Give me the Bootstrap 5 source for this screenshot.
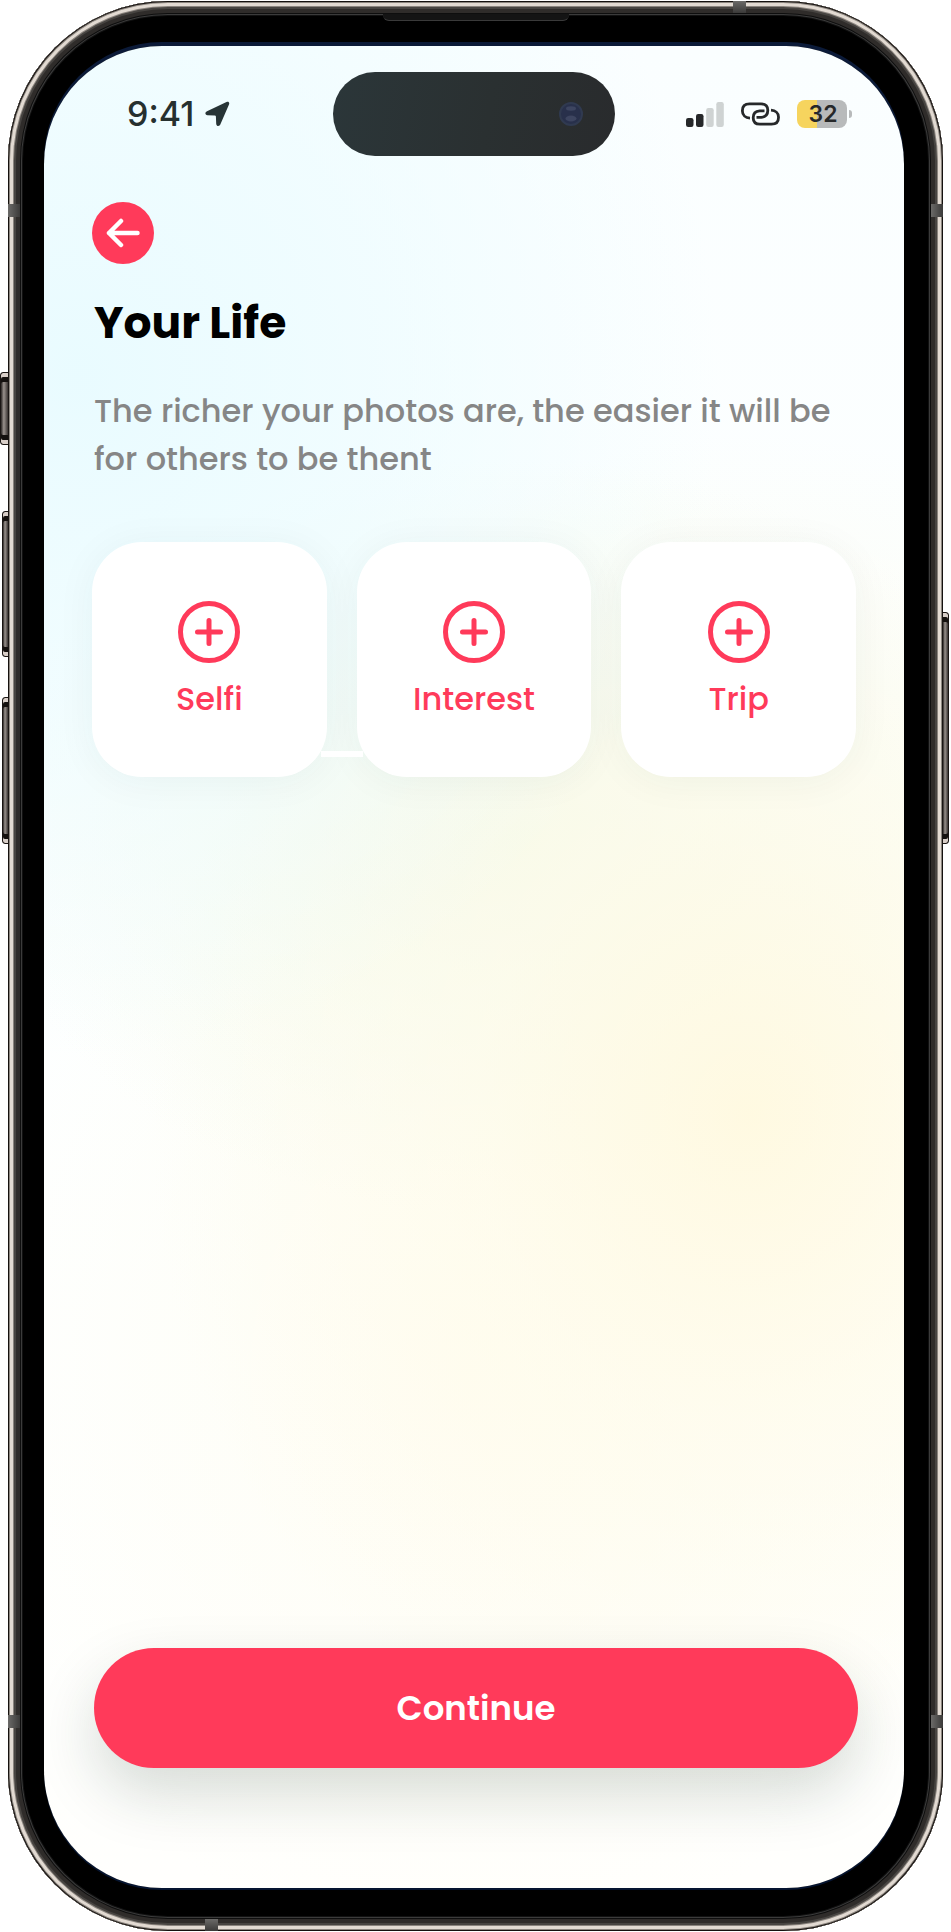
<!DOCTYPE html>
<html lang="en">
<head>
<meta charset="utf-8">
<meta name="viewport" content="width=device-width, initial-scale=1">
<title>Your Life</title>
<link href="https://cdn.jsdelivr.net/npm/bootstrap@5.3.0/dist/css/bootstrap.min.css" rel="stylesheet">
<style>
  :root { --accent: #ff3a5a; --ink: #26302f; }
  body { background: #fff; font-family: Poppins, Inter, "Open Sans", sans-serif; }

  /* Device frame */
  .device { padding: 1px 0; }
  .phone {
    margin: 0 8px; min-height: calc(100vh - 2px); padding: 45px 39px 43px 36px;
    border-radius: 160px; background: #000;
    box-shadow: inset 0 0 0 1px #15110f, inset 0 0 0 2px #8d8780, inset 0 0 0 5px #e2dad2,
      inset 0 0 0 6px #8a847e, inset 0 0 0 8px #474441, inset 0 0 0 12px #2f2c2a,
      inset 0 0 0 13px #0e0e0e, inset 0 0 0 14px #3b3b3b, inset 0 0 0 15px #111;
  }
  .screen {
    border-radius: 118px;
    box-shadow: 0 -4px 0 #0b1a38, 0 2px 0 #051430;
    background:
      radial-gradient(ellipse 640px 680px at 4% 18%, rgba(232,251,255,.95), rgba(236,252,255,.65) 50%, rgba(255,255,255,0)),
      radial-gradient(ellipse 600px 680px at 82% 58%, rgba(255,249,224,.95), rgba(255,251,232,.6) 45%, rgba(255,255,255,0)),
      radial-gradient(ellipse 540px 380px at 55% 43%, rgba(243,249,234,.95), rgba(255,255,255,0)),
      radial-gradient(ellipse 500px 600px at 50% 72%, rgba(255,253,242,.9), rgba(255,255,255,0)),
      linear-gradient(#fafeff, #fdffff 40%, #fffffd);
  }
  .side-key { position: absolute; background: linear-gradient(90deg, #2b2624, #9a928d 40%, #3a3432); border: 1px solid #1a1513; box-shadow: inset 0 4px 0 #d8cec8, inset 0 -4px 0 #d8cec8, inset 0 9px 0 #15110f, inset 0 -9px 0 #15110f; }
  .key-left { left: 2px; width: 7px; border-radius: 3px 0 0 3px; }
  .key-mute { left: 0; width: 9px; top: 372px; height: 73px; }
  .key-up { top: 511px; height: 146px; }
  .key-down { top: 697px; height: 147px; }
  .key-power { right: 2px; width: 7px; top: 612px; height: 232px; border-radius: 0 3px 3px 0; }
  .band { position: absolute; background: linear-gradient(90deg, #6b6a68, #3b3a39); }
  .band-h { width: 12px; height: 13px; }
  .band-v { width: 13px; height: 12px; background: linear-gradient(#6b6a68, #3b3a39); }
  .band-l { left: 8px; } .band-r { right: 8px; }
  .band-hi { top: 204px; } .band-lo { bottom: 204px; }
  .band-t { top: 1px; right: 205px; } .band-b { bottom: 1px; left: 205px; }
  .earpiece { position: absolute; top: 14px; left: 50%; width: 186px; height: 7px; transform: translateX(-50%); background: #141414; border-bottom: 1px solid #3a3a3a; border-radius: 0 0 6px 6px; }

  /* Status bar */
  .status { display: grid; grid-template-columns: 1fr 282px 1fr; align-items: center; padding-top: 26px; color: var(--ink); }
  .status-l { padding-left: 83px; gap: 11px; }
  .status-r { padding-right: 52px; gap: 17px; }
  .clock { font: 500 34px/40px Inter, sans-serif; }
  .island { height: 84px; border-radius: 42px; padding-right: 32px; background: linear-gradient(100deg, #2b3639, #2a3031 55%, #292b2d); }
  .battery { font: 600 23px/28px Inter, sans-serif; width: 50px; height: 28px; border-radius: 8px; text-align: center; color: #26282a; background: linear-gradient(90deg, #f6d45e 40%, #b8babb 40%); padding-left: 2px; }
  .nub { width: 3px; height: 8px; margin-left: 2px; border-radius: 0 4px 4px 0; background: #b8babb; }

  /* Content */
  .content { padding: 46px 48px 0; }
  .back { width: 62px; height: 62px; background: var(--accent); border: 0; }
  .title { font-size: 44px; line-height: 56px; font-weight: 700; color: #000; margin: 31px 0 36px 2px; }
  .intro { font-size: 32px; line-height: 48px; font-weight: 500; color: #868686; margin: 0 0 59px 2px; }
  .slots { display: grid; grid-template-columns: repeat(3, 1fr); gap: 30px; }
  .slot {
    position: relative; aspect-ratio: 1; gap: 12px; padding: 6px 0 0; border: 0; border-radius: 50px; background: #fff; color: var(--accent);
    font-size: 32px; line-height: 48px; font-weight: 500; box-shadow: 0 4px 40px rgba(20,60,50,.05);
  }
  .slot-linked::after { content: ""; position: absolute; left: calc(100% - 6px); bottom: 20px; width: 42px; height: 6px; background: #fff; z-index: 1; }
  .actions { padding: 0 46px 120px 50px; }
  .continue { height: 120px; border: 0; border-radius: 60px; background: var(--accent); color: #fff; font-size: 34px; line-height: 48px; font-weight: 600; box-shadow: 0 26px 60px rgba(20,50,35,.17); }
</style>
</head>
<body>
<div class="device position-relative">
  <i class="side-key key-left key-mute"></i>
  <i class="side-key key-left key-up"></i>
  <i class="side-key key-left key-down"></i>
  <i class="side-key key-power"></i>
  <div class="phone d-flex flex-column">
    <div class="screen flex-grow-1 d-flex flex-column">
      <header class="status">
        <div class="status-l d-flex align-items-center">
          <span class="clock">9:41</span>
          <svg width="25" height="26" viewBox="0 0 25 26" aria-hidden="true"><path d="M21.500 1.100 2 10.200C-.4 11.400 0 14 2.400 14.200L9.800 14.500Q10.800 14.600 10.900 15.600L11.200 22.700C11.400 25.500 14.300 25.800 15.300 23.600L24 3.600C24.800 1.600 23.400.2 21.500 1.100Z" fill="#273436"/></svg>
        </div>
        <div class="island d-flex align-items-center justify-content-end">
          <svg width="24" height="24" viewBox="0 0 24 24" aria-hidden="true"><circle cx="12" cy="12" r="11" fill="#28304b" stroke="#303a50" stroke-width="2"/><ellipse cx="12" cy="6.500" rx="5" ry="2.200" fill="#3d4560"/><ellipse cx="12" cy="16.500" rx="5.500" ry="3" fill="#3d4560"/></svg>
        </div>
        <div class="status-r d-flex align-items-center justify-content-end">
          <svg width="38" height="26" viewBox="0 0 38 26" aria-label="Signal"><g fill="#26282a"><rect y="17" width="7.500" height="9" rx="2.200"/><rect x="10" y="13" width="7.500" height="13" rx="2.200"/></g><g fill="#cfd3d3"><rect x="20.200" y="7" width="7.500" height="19" rx="2.200"/><rect x="30.300" y="1" width="7.500" height="25" rx="2.200"/></g></svg>
          <svg width="39" height="24" viewBox="0 0 39 24" fill="none" stroke="#26282a" stroke-width="2.800" stroke-linecap="butt" aria-hidden="true"><path d="M9 16.200C4.500 16 1.400 13.200 1.400 9V8.500Q1.400 1.800 8.500 1.800H20Q26.800 1.800 26.800 8.300T20.300 15.300H15.500"/><path d="M30 8.200C34.500 8.500 37.500 11.200 37.500 15V15.500Q37.500 22.200 30.500 22.200H19Q12.200 22.200 12.200 15.700T18.700 8.900H23.500"/></svg>
          <div class="d-flex align-items-center"><div class="battery">32</div><i class="nub"></i></div>
        </div>
      </header>

      <main class="content">
        <button type="button" class="back rounded-circle p-0 d-flex align-items-center justify-content-center" aria-label="Back">
          <svg width="34" height="30" viewBox="0 0 34 30" fill="none" stroke="#fff" stroke-width="4.500" stroke-linecap="round" stroke-linejoin="round" aria-hidden="true"><path d="M31.500 15H3M15 3 3 15 15 27"/></svg>
        </button>
        <h1 class="title">Your Life</h1>
        <p class="intro">The richer your photos are, the easier it will be for others to be thent</p>
        <div class="slots">
          <button type="button" class="slot slot-linked d-flex flex-column align-items-center justify-content-center">
            <svg width="62" height="62" viewBox="0 0 62 62" fill="none" stroke="currentColor" stroke-width="5" stroke-linecap="round" aria-hidden="true"><circle cx="31" cy="31" r="28.500"/><path d="M31 19.500v23M19.500 31h23"/></svg>
            <span>Selfi</span>
          </button>
          <button type="button" class="slot d-flex flex-column align-items-center justify-content-center">
            <svg width="62" height="62" viewBox="0 0 62 62" fill="none" stroke="currentColor" stroke-width="5" stroke-linecap="round" aria-hidden="true"><circle cx="31" cy="31" r="28.500"/><path d="M31 19.500v23M19.500 31h23"/></svg>
            <span>Interest</span>
          </button>
          <button type="button" class="slot d-flex flex-column align-items-center justify-content-center">
            <svg width="62" height="62" viewBox="0 0 62 62" fill="none" stroke="currentColor" stroke-width="5" stroke-linecap="round" aria-hidden="true"><circle cx="31" cy="31" r="28.500"/><path d="M31 19.500v23M19.500 31h23"/></svg>
            <span>Trip</span>
          </button>
        </div>
      </main>

      <footer class="actions mt-auto">
        <button type="button" class="continue w-100">Continue</button>
      </footer>
    </div>
  </div>
  <i class="band band-h band-l band-hi"></i>
  <i class="band band-h band-r band-hi"></i>
  <i class="band band-h band-l band-lo"></i>
  <i class="band band-h band-r band-lo"></i>
  <i class="band band-v band-t"></i>
  <i class="band band-v band-b"></i>
  <i class="earpiece"></i>
</div>
<script src="https://cdn.jsdelivr.net/npm/bootstrap@5.3.0/dist/js/bootstrap.bundle.min.js"></script>
</body>
</html>
